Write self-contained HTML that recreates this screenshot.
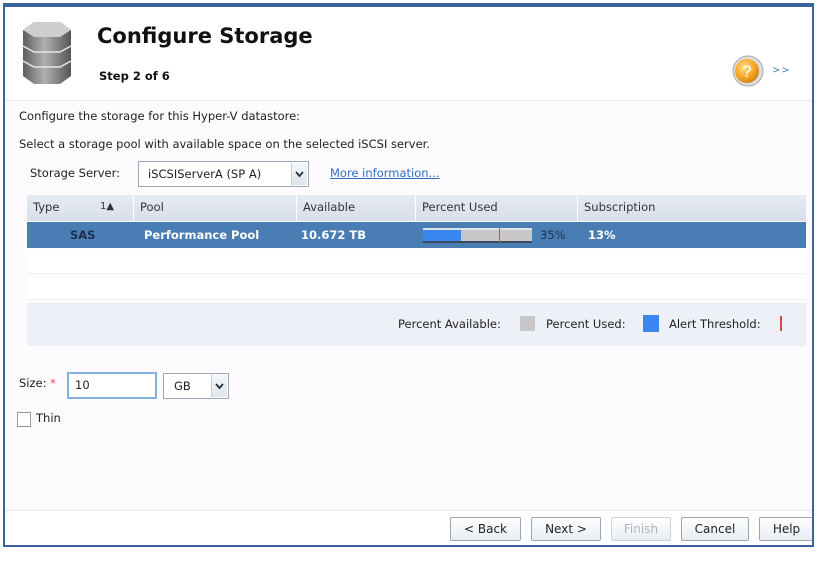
<!DOCTYPE html>
<html><head><meta charset="utf-8">
<style>
*{box-sizing:border-box;margin:0;padding:0}
body{width:830px;height:578px;background:#fff;font-family:"DejaVu Sans",sans-serif;font-size:11.5px;color:#222;position:relative;overflow:hidden}
.frame{position:absolute;left:3px;top:3px;width:811px;height:544px;border:2px solid #3a64a0;border-top-width:4px;background:#fdfbfd;overflow:hidden}
.hdr{position:absolute;left:0;top:0;width:100%;height:94px;background:#fff;border-bottom:1px solid #e8e8ee}
.abs{position:absolute;white-space:nowrap}
.title{left:92px;top:17px;font-size:21px;font-weight:bold;color:#111}
.step{left:94px;top:62px;font-size:11.5px;font-weight:bold;color:#111}
.tbl{position:absolute;left:22px;width:779px}
.th{top:188px;height:26px;background:linear-gradient(#e6ebf3,#d8dfea)}
.th div{position:absolute;top:0;height:26px;line-height:24px;padding-left:6px;border-right:1px solid #fff;color:#333}
.sel{top:215px;height:26px;background:#4a7db3;color:#fff;font-weight:bold}
.sel div{position:absolute;top:0;line-height:26px}
.row{height:25px;background:#fff;border-bottom:1px solid #f0eef4}
.leg{top:296px;height:43px;background:#eef0f8}
.btn{position:absolute;top:510px;height:24px;border:1px solid #9aa7b8;border-radius:2px;background:linear-gradient(#fff,#e9edf2);text-align:center;line-height:22px;font-size:12px;color:#222}
.arr{position:absolute;right:1px;top:1px;width:16px;background:linear-gradient(#f5f7fa,#dfe4ea);border-left:1px solid #c8ced8;padding:0}
</style></head><body>
<div class="frame">
 <div class="hdr">
  <svg class="abs" style="left:17px;top:13px" width="50" height="66" viewBox="0 0 50 66">
   <defs><linearGradient id="g" x1="0" x2="1"><stop offset="0" stop-color="#5e5e5e"/><stop offset=".45" stop-color="#b0b0b0"/><stop offset="1" stop-color="#555"/></linearGradient></defs>
   <path d="M1 10 L12 2 H38 L49 10 V56 L38 64 H12 L1 56 Z" fill="url(#g)"/>
   <path d="M1 10 L12 2 H38 L49 10 L38 17 H12 Z" fill="#cfcfcf"/>
   <path d="M1 26 L12 32 H38 L49 26 M1 41 L12 47 H38 L49 41" stroke="#e6e6e6" stroke-width="1.5" fill="none"/>
  </svg>
  <div class="abs title">Configure Storage</div>
  <div class="abs step">Step 2 of 6</div>
  <svg class="abs" style="left:727px;top:48px" width="32" height="32" viewBox="0 0 32 32">
   <defs><radialGradient id="o" cx=".4" cy=".35" r=".7"><stop offset="0" stop-color="#ffe08a"/><stop offset=".6" stop-color="#f5a623"/><stop offset="1" stop-color="#d07d10"/></radialGradient></defs>
   <circle cx="16" cy="16" r="15" fill="#ddd" stroke="#aaa"/>
   <circle cx="15" cy="16" r="12" fill="url(#o)"/>
   <text x="15" y="22" text-anchor="middle" font-size="17" fill="#fff" font-family="Liberation Sans">?</text>
  </svg>
  <div class="abs" style="left:767px;top:58px;color:#4a7db3;font-size:10px;letter-spacing:1px">&gt;&gt;</div>
 </div>
 <div class="abs" style="left:14px;top:102px">Configure the storage for this Hyper-V datastore:</div>
 <div class="abs" style="left:14px;top:130px">Select a storage pool with available space on the selected iSCSI server.</div>
 <div class="abs" style="left:25px;top:159px">Storage Server:</div>
 <div class="abs" style="left:133px;top:154px;width:171px;height:26px;border:1px solid #9aa7b8;background:#fff;line-height:24px;padding-left:9px">iSCSIServerA (SP A)
  <div class="arr" style="height:22px"><svg width="15" height="22"><path d="M4 9 L7.5 13 L11 9" stroke="#234" stroke-width="1.8" fill="none"/></svg></div></div>
 <div class="abs" style="left:325px;top:159px;color:#2f6fc0;text-decoration:underline">More information...</div>

 <div class="tbl th">
  <div style="left:0;width:107px">Type<span style="position:absolute;left:73px;font-size:10px">1&#9650;</span></div>
  <div style="left:107px;width:163px">Pool</div>
  <div style="left:270px;width:119px">Available</div>
  <div style="left:389px;width:162px">Percent Used</div>
  <div style="left:551px;width:228px;border:none">Subscription</div>
 </div>
 <div class="tbl sel">
  <div style="left:43px;color:#1a2f50">SAS</div>
  <div style="left:117px">Performance Pool</div>
  <div style="left:274px">10.672 TB</div>
  <div style="left:396px;top:6px;width:109px;height:15px;background:#c8c6c8;border-top:2px solid #dfe3ea;border-bottom:2px solid #3b4a5c">
   <div style="position:absolute;left:0;top:0;width:38px;height:11px;background:#3c86f0"></div>
   <div style="position:absolute;left:76px;top:-2px;width:1px;height:15px;background:#d44"></div>
  </div>
  <div style="left:513px;font-weight:normal;color:#1a2f50">35%</div>
  <div style="left:561px">13%</div>
 </div>
 <div class="tbl row" style="top:242px"></div>
 <div class="tbl row" style="top:268px"></div>
 <div class="tbl leg">
  <div class="abs" style="left:371px;top:14px">Percent Available:</div>
  <div class="abs" style="left:493px;top:13px;width:15px;height:15px;background:#c8c6c8"></div>
  <div class="abs" style="left:519px;top:14px">Percent Used:</div>
  <div class="abs" style="left:616px;top:12px;width:16px;height:17px;background:#3c86f0"></div>
  <div class="abs" style="left:642px;top:14px">Alert Threshold:</div>
  <div class="abs" style="left:753px;top:13px;width:2px;height:15px;background:#d44"></div>
 </div>

 <div class="abs" style="left:14px;top:369px">Size: <span style="color:#e44">*</span></div>
 <div class="abs" style="left:62px;top:365px;width:90px;height:27px;border:2px solid #7fb0e0;background:#fff;line-height:22px;padding-left:6px">10</div>
 <div class="abs" style="left:158px;top:366px;width:66px;height:26px;border:1px solid #9aa7b8;background:#fff;line-height:24px;padding-left:10px">GB
  <div class="arr" style="height:22px"><svg width="15" height="22"><path d="M4 9 L7.5 13 L11 9" stroke="#234" stroke-width="1.8" fill="none"/></svg></div></div>
 <div class="abs" style="left:12px;top:405px;width:14px;height:15px;border:1px solid #999;background:#fff"></div>
 <div class="abs" style="left:31px;top:404px">Thin</div>

 <div class="abs" style="left:0;top:503px;width:100%;height:41px;background:#fff;border-top:1px solid #e4e8ee"></div>
 <div class="btn" style="left:445px;width:71px">&lt; Back</div>
 <div class="btn" style="left:526px;width:70px">Next &gt;</div>
 <div class="btn" style="left:606px;width:60px;color:#b0b4ba;border-color:#cdd3dc">Finish</div>
 <div class="btn" style="left:676px;width:68px">Cancel</div>
 <div class="btn" style="left:754px;width:55px">Help</div>
</div>
</body></html>
